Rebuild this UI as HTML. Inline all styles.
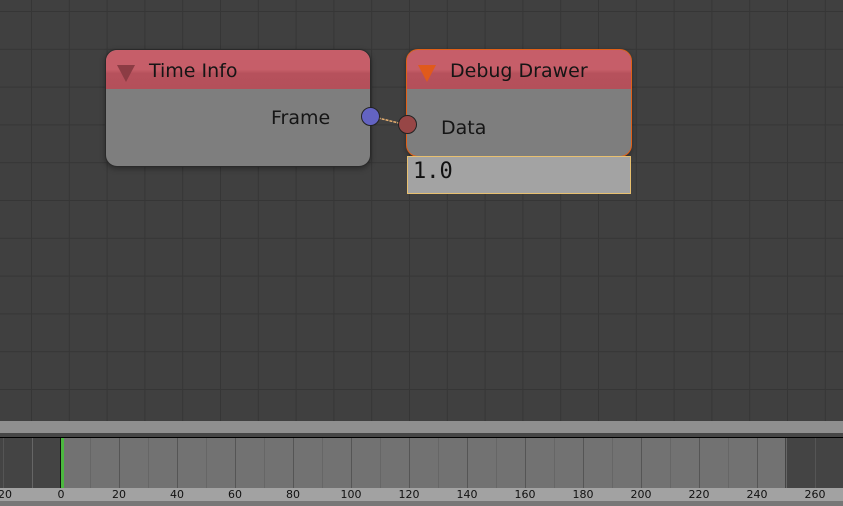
<!DOCTYPE html>
<html><head><style>
body{margin:0;width:843px;height:506px;overflow:hidden;background:#404040;font-family:"DejaVu Sans","Liberation Sans",sans-serif;position:relative}
.grid{position:absolute;left:0;top:0;width:843px;height:421px;
background-image:linear-gradient(to right,#363636 1px,transparent 1px),linear-gradient(to bottom,#363636 1px,transparent 1px);
background-size:37.8px 37.8px;background-position:31px 11px}
.node{position:absolute;border-radius:12px;overflow:hidden;background:#7e7e7e;box-shadow:0 2px 6px rgba(0,0,0,.35)}
.hdr{position:absolute;left:0;top:0;right:0;height:39px;background:linear-gradient(#c65e69 0,#c65e69 50%,#b6515c 60%,#b4505a 100%)}
.hdr span{position:absolute;left:43px;top:10px;font-size:19px;color:#151515}
.tri{position:absolute;left:11px;top:15px;width:0;height:0;border-left:9px solid transparent;border-right:9px solid transparent;border-top:17px solid #8c3c44}
.lbl{position:absolute;font-size:19px;color:#151515}
.sock{position:absolute;width:17px;height:17px;border-radius:50%;border:1px solid #222}
</style></head><body>
<div class="grid"></div>
<div class="node" style="left:105px;top:49px;width:264px;height:116px;border:1px solid #2a2a2a">
 <div class="hdr"><div class="tri"></div><span>Time Info</span></div>
 <div class="lbl" style="left:165px;top:57px">Frame</div>
</div>
<div class="node" style="left:406px;top:49px;width:224px;height:106px;border:1px solid #e06018">
 <div class="hdr"><div class="tri" style="border-top-color:#e05a1c"></div><span>Debug Drawer</span></div>
 <div class="lbl" style="left:34px;top:67px">Data</div>
</div>
<svg style="position:absolute;left:0;top:0" width="843" height="200"><line x1="370" y1="116" x2="407" y2="125" stroke="#e8b070" stroke-width="1.5" stroke-dasharray="3 1"/></svg>
<div class="sock" style="left:361px;top:107px;background:#6363c2"></div>
<div class="sock" style="left:398px;top:115px;background:#974646"></div>
<div style="position:absolute;left:407px;top:156px;width:222px;height:36px;background:#a3a3a3;border:1px solid #e8c070"><span style="position:absolute;left:5px;top:2px;font-family:'DejaVu Sans Mono','Liberation Mono',monospace;font-size:22px;color:#111">1.0</span></div>
<div style="position:absolute;left:0;top:421px;width:843px;height:12px;background:#8f8f8f"></div>
<div style="position:absolute;left:0;top:433px;width:843px;height:4px;background:#464646"></div>
<div style="position:absolute;left:0;top:437px;width:843px;height:1px;background:#000"></div>
<div id="trk" style="position:absolute;left:0;top:438px;width:843px;height:50px;background:#444">
<div style="position:absolute;left:62px;top:0;width:723px;height:50px;background:#727272"></div>
</div>
<div style="position:absolute;left:60px;top:438px;width:3px;height:50px;background:#4cb840;border-left:1px solid #111"></div>
<div style="position:absolute;left:0;top:488px;width:843px;height:13px;background:#a2a2a2"></div>
<div style="position:absolute;left:0;top:501px;width:843px;height:5px;background:#777"></div>
<script>
var t=document.getElementById('trk');
for(var f=-20;f<=280;f+=10){var x=61+f*2.9;if(f===0)continue;var d=document.createElement('div');d.style.cssText='position:absolute;top:0;height:50px;width:1px;left:'+Math.round(x)+'px;background:'+(f%20===0?'#555':'#666');t.appendChild(d);}
for(var f=-20;f<=260;f+=20){var x=61+f*2.9;var s=document.createElement('div');s.textContent=f;s.style.cssText='position:absolute;top:488px;font-size:11px;color:#111;width:40px;text-align:center;left:'+(x-20)+'px';document.body.appendChild(s);}
</script>
</body></html>
